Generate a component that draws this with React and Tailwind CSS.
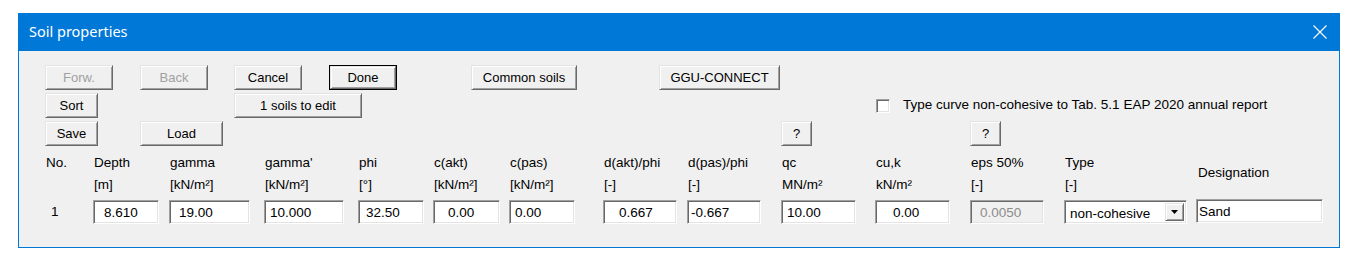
import React from "react";

function Btn({ children, className = "", disabled = false, def = false }) {
  const inner = (
    <div
      className={
        "h-full w-full flex items-center justify-center bg-[#f0f0f0] border border-t-[#e3e3e3] border-l-[#e3e3e3] border-b-[#696969] border-r-[#696969] shadow-[inset_1px_1px_0_#ffffff,inset_-1px_-1px_0_#a0a0a0] text-[13px] leading-none " +
        (disabled ? "text-[#a0a0a0]" : "text-black")
      }
    >
      <span className="-mt-px">{children}</span>
    </div>
  );
  if (def) {
    return <div className={"h-[25px] border border-black " + className}>{inner}</div>;
  }
  return <div className={"h-[25px] " + className}>{inner}</div>;
}

function Field({ value, className = "", pad = "pl-[8px]", disabled = false }) {
  return (
    <div
      className={
        "h-[24px] flex items-center border border-t-[#a0a0a0] border-l-[#a0a0a0] border-b-white border-r-white shadow-[inset_1px_1px_0_#696969,inset_-1px_-1px_0_#e3e3e3] text-[13.5px] leading-none " +
        (disabled ? "bg-[#f0f0f0] text-[#8c8c8c] " : "bg-white text-black ") +
        pad +
        " " +
        className
      }
    >
      <span className="mt-px">{value}</span>
    </div>
  );
}

function Col({ w, l1, l2, children }) {
  return (
    <div className={"flex flex-col shrink-0 " + w}>
      <div className="h-[44px] flex flex-col leading-[22px] pl-px">
        <div>{l1}</div>
        <div>{l2}</div>
      </div>
      <div className="mt-[4px]">{children}</div>
    </div>
  );
}

export default function App() {
  return (
    <div className="w-[1362px] h-[270px] bg-white pt-[13px] pl-[18px] font-['Liberation_Sans',Arial,sans-serif] text-black">
      <div className="w-[1322px] h-[235px] border border-[#0078d7] flex flex-col bg-[#f0f0f0]">
        {/* Title bar */}
        <div className="h-[37px] bg-[#0078d7] flex items-center justify-between pl-[10px] pr-[12px] shrink-0">
          <span className="text-white text-[14.5px] font-['Noto_Sans',sans-serif] -mt-[1px]">Soil properties</span>
          <svg width="14" height="14" viewBox="0 0 14 14" className="-mt-[1px]">
            <path d="M0.5 0.5 L13.5 13.5 M13.5 0.5 L0.5 13.5" stroke="white" strokeWidth="1.1" fill="none" />
          </svg>
        </div>
        {/* Body */}
        <div className="flex-1 pl-[26px] pt-[14px] text-[13.5px]">
          {/* Row 1 */}
          <div className="flex items-center h-[25px]">
            <Btn disabled className="w-[68px]">Forw.</Btn>
            <Btn disabled className="w-[68px] ml-[27px]">Back</Btn>
            <Btn className="w-[68px] ml-[26px]">Cancel</Btn>
            <Btn def className="w-[68px] ml-[27px]">Done</Btn>
            <Btn className="w-[106px] ml-[74px]">Common soils</Btn>
            <Btn className="w-[121px] ml-[82px]">GGU-CONNECT</Btn>
          </div>
          {/* Row 2 */}
          <div className="flex items-center h-[25px] mt-[3px]">
            <Btn className="w-[53px]">Sort</Btn>
            <Btn className="w-[128px] ml-[136px]">1 soils to edit</Btn>
            <div className="w-[14px] h-[14px] ml-[514px] mt-[1px] bg-white border border-t-[#a0a0a0] border-l-[#a0a0a0] border-b-white border-r-white shadow-[inset_1px_1px_0_#696969,inset_-1px_-1px_0_#e3e3e3]" />
            <span className="ml-[13px] text-[13.5px]">Type curve non-cohesive to Tab. 5.1 EAP 2020 annual report</span>
          </div>
          {/* Row 3 */}
          <div className="flex items-center h-[25px] mt-[3px]">
            <Btn className="w-[53px]">Save</Btn>
            <Btn className="w-[83px] ml-[42px]">Load</Btn>
            <Btn className="w-[31px] ml-[558px]">?</Btn>
            <Btn className="w-[31px] ml-[158px]">?</Btn>
          </div>
          {/* Table */}
          <div className="flex mt-[6px] -ml-[26px] pl-[27px]">
            <div className="flex flex-col shrink-0 w-[47px]">
              <div className="h-[44px] leading-[22px]">No.</div>
              <div className="mt-[4px] h-[24px] flex items-center pl-[5px]"><span className="mt-px">1</span></div>
            </div>
            <Col w="w-[76px]" l1="Depth" l2="[m]">
              <Field value="8.610" className="w-[66px]" pad="pl-[10px]" />
            </Col>
            <Col w="w-[95px]" l1="gamma" l2="[kN/m²]">
              <Field value="19.00" className="w-[81px]" pad="pl-[9px]" />
            </Col>
            <Col w="w-[94px]" l1="gamma'" l2="[kN/m²]">
              <Field value="10.000" className="w-[80px]" pad="pl-[5px]" />
            </Col>
            <Col w="w-[75px]" l1="phi" l2="[°]">
              <Field value="32.50" className="w-[66px]" pad="pl-[7px]" />
            </Col>
            <Col w="w-[76px]" l1="c(akt)" l2="[kN/m²]">
              <Field value="0.00" className="w-[67px]" pad="pl-[14px]" />
            </Col>
            <Col w="w-[94px]" l1="c(pas)" l2="[kN/m²]">
              <Field value="0.00" className="w-[66px]" pad="pl-[5px]" />
            </Col>
            <Col w="w-[84px]" l1="d(akt)/phi" l2="[-]">
              <Field value="0.667" className="w-[74px]" pad="pl-[15px]" />
            </Col>
            <Col w="w-[94px]" l1="d(pas)/phi" l2="[-]">
              <Field value="-0.667" className="w-[74px]" pad="pl-[3px]" />
            </Col>
            <Col w="w-[94px]" l1="qc" l2="MN/m²">
              <Field value="10.00" className="w-[75px]" pad="pl-[5px]" />
            </Col>
            <Col w="w-[95px]" l1="cu,k" l2="kN/m²">
              <Field value="0.00" className="w-[75px]" pad="pl-[17px]" />
            </Col>
            <Col w="w-[94px]" l1="eps 50%" l2="[-]">
              <Field value="0.0050" className="w-[74px]" pad="pl-[9px]" disabled />
            </Col>
            <Col w="w-[132px]" l1="Type" l2="[-]">
              <div className="w-[123px] h-[24px] flex items-center justify-between bg-white border border-t-[#a0a0a0] border-l-[#a0a0a0] border-b-white border-r-white shadow-[inset_1px_1px_0_#696969,inset_-1px_-1px_0_#e3e3e3] pl-[5px] pr-[2px]">
                <span className="mt-[3px] text-[13.5px] leading-none">non-cohesive</span>
                <div className="w-[19px] h-[18px] flex items-center justify-center bg-[#f0f0f0] border border-t-[#e3e3e3] border-l-[#e3e3e3] border-b-[#696969] border-r-[#696969] shadow-[inset_1px_1px_0_#ffffff,inset_-1px_-1px_0_#a0a0a0]">
                  <svg width="7" height="4" viewBox="0 0 7 4">
                    <path d="M0 0 H7 L3.5 4 Z" fill="black" />
                  </svg>
                </div>
              </div>
            </Col>
            <div className="flex flex-col shrink-0 w-[127px]">
              <div className="h-[44px] flex items-center pl-[2px] -mt-[1px]">Designation</div>
              <div className="mt-[4px]">
                <Field value="Sand" className="w-[127px]" pad="pl-[2px]" />
              </div>
            </div>
          </div>
        </div>
      </div>
    </div>
  );
}
